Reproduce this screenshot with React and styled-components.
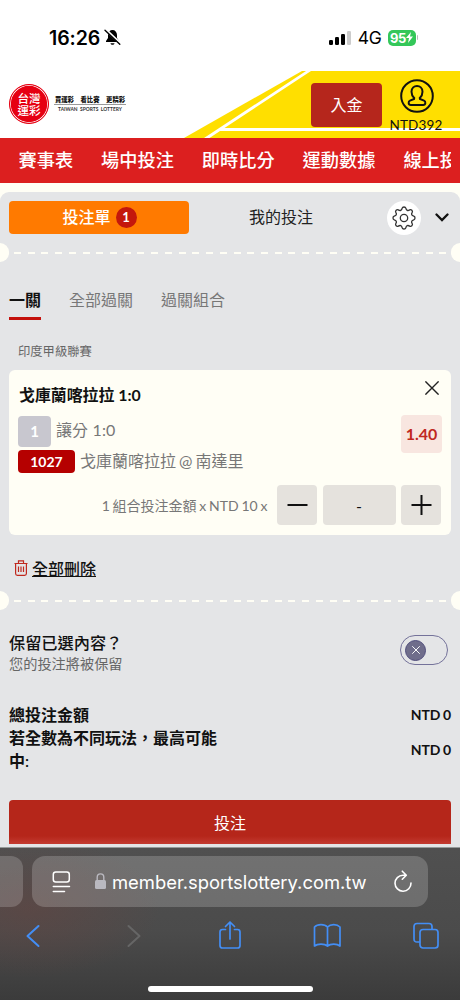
import styled, { createGlobalStyle } from 'styled-components';

const GlobalStyle = createGlobalStyle`
  * {
    box-sizing: border-box;
  }

  body {
    margin: 0;
    background: #fffef5;
    font-family: Lato, "Noto Sans CJK TC", sans-serif;
    color: #111;
  }

  button {
    font-family: inherit;
    border: none;
    padding: 0;
    cursor: pointer;
  }

  svg {
    display: block;
    flex-shrink: 0;
  }
`;

const Phone = styled.div`
  width: 460px;
  height: 1000px;
  display: flex;
  flex-direction: column;
  overflow: hidden;
  white-space: nowrap;
`;

const StatusBar = styled.div`
  height: 71px;
  padding: 4px 42px 0 49px;
  display: flex;
  align-items: center;
  justify-content: space-between;
  background: #fff;
  color: #000;
  font-family: Inter, sans-serif;
`;

const StatusGroup = styled.div`
  display: flex;
  align-items: center;
  gap: ${(props) => props.$gap}px;
`;

const Clock = styled.span`
  font-size: 19.5px;
  font-weight: 600;
  letter-spacing: -0.1px;
`;

const Network = styled.span`
  font-size: 17.5px;
  font-weight: 400;
  letter-spacing: -0.3px;
`;

const BatteryGroup = styled.div`
  display: flex;
  align-items: center;
  gap: 1px;

  &::after {
    content: "";
    width: 1.5px;
    height: 5px;
    border-radius: 0 2px 2px 0;
    background: #bbb;
  }
`;

const Battery = styled.div`
  width: 28px;
  height: 16px;
  display: flex;
  align-items: center;
  justify-content: center;
  border-radius: 5px;
  background: #34c759;
  color: #fff;
  font-size: 13px;
  font-weight: 700;
  letter-spacing: -0.4px;
`;

const Header = styled.header`
  height: 67px;
  display: grid;
  background: #fff;

  > * {
    grid-area: 1 / 1;
  }
`;

const HeaderContent = styled.div`
  display: flex;
  z-index: 1;
  padding-left: 9px;
`;

const Logo = styled.div`
  width: 40px;
  height: 40px;
  margin-top: 13px;
  padding-top: 8px;
  display: flex;
  flex-direction: column;
  align-items: center;
  border: 1px solid #e60012;
  border-radius: 50%;
  background: #e60012;
  box-shadow: inset 0 0 0 0.8px #fff;
  color: #fff;
  font-size: 11.6px;
  font-weight: 500;
  line-height: 11.5px;
`;

const Slogan = styled.div`
  width: 72px;
  margin: 22px 0 0 5px;
  display: flex;
  flex-direction: column;
  align-items: center;
`;

const SloganText = styled.div`
  width: 100%;
  height: 12px;
  display: flex;
  justify-content: space-between;
  padding: 0 1px;
  border-bottom: 1px solid #999;
  font-size: 6.3px;
  font-weight: 900;
  line-height: 13px;
`;

const SloganEnglish = styled.div`
  margin-top: 1px;
  color: #333;
  font-size: 4.9px;
  font-weight: 700;
  line-height: 7px;
  word-spacing: 1.3px;
`;

const DepositButton = styled.button`
  width: 71px;
  height: 44px;
  margin: 12px 0 0 auto;
  padding-bottom: 2px;
  border-radius: 4px;
  background: #b5261c;
  color: #fff;
  font-size: 16px;
`;

const Account = styled.div`
  width: 78px;
  padding-top: 8px;
  display: flex;
  flex-direction: column;
  align-items: center;
  font-size: 13.5px;
  line-height: 18px;

  span {
    margin: 3px 10px 0 0;
    letter-spacing: 0.2px;
  }

  svg {
    margin-right: 8px;
  }
`;

const Nav = styled.nav`
  height: 45px;
  padding: 0 9px 0 18.5px;
  background: #dc1f1f;
`;

const NavList = styled.div`
  display: flex;
  gap: 28px;
  overflow: hidden;
  color: #fff;
  font-size: 18.2px;
  font-weight: 500;
  line-height: 45px;

  span {
    flex-shrink: 0;
  }
`;

const Slip = styled.main`
  height: 655px;
  margin-top: 9px;
  display: flex;
  flex-direction: column;
  border-radius: 9px 9px 0 0;
  background: #e4e5e7;
`;

const SlipTabs = styled.div`
  height: 51px;
  padding: 0 11px 0 9px;
  display: flex;
  align-items: center;
`;

const SlipTab = styled.button`
  width: ${(props) => (props.$active ? 180 : 184)}px;
  height: 33px;
  padding-bottom: ${(props) => (props.$active ? 0 : 3)}px;
  display: flex;
  align-items: center;
  justify-content: center;
  gap: 5px;
  border-radius: 4px;
  background: ${(props) => (props.$active ? '#ff7a00' : 'transparent')};
  color: ${(props) => (props.$active ? '#fff' : '#222')};
  font-size: 16px;
  font-weight: ${(props) => (props.$active ? 500 : 400)};
`;

const TabLabel = styled.span`
  padding: 0 0 3px 1px;
`;

const Count = styled.span`
  width: 21px;
  height: 21px;
  border-radius: 50%;
  background: #c4170c;
  font-size: 13px;
  font-weight: 700;
  line-height: 21px;
`;

const SettingsButton = styled.button`
  width: 34px;
  height: 34px;
  margin: 0 auto 0 14px;
  display: flex;
  align-items: center;
  justify-content: center;
  border-radius: 50%;
  background: #fff;
`;

const Perforation = styled.div`
  height: 19px;
  display: flex;
  align-items: center;
  justify-content: space-between;

  &::before,
  &::after {
    content: "";
    width: 9px;
    height: 19px;
    background: #fffef5;
  }

  &::before {
    border-radius: 0 10px 10px 0;
  }

  &::after {
    border-radius: 10px 0 0 10px;
  }
`;

const Dashes = styled.div`
  height: 2px;
  margin: 1px 0 0 5px;
  flex: 1;
  background: repeating-linear-gradient(90deg, #fffef5 0 7px, transparent 7px 13.72px);
`;

const ModeTabs = styled.div`
  height: 58px;
  padding: 24px 9px 0;
  display: flex;
  gap: 28px;
`;

const ModeTab = styled.div`
  height: 34px;
  border-bottom: 3px solid ${(props) => (props.$active ? '#c4110c' : 'transparent')};
  color: ${(props) => (props.$active ? '#111' : '#777')};
  font-size: 16px;
  font-weight: ${(props) => (props.$active ? 700 : 400)};
  line-height: 27px;
`;

const League = styled.div`
  height: 50px;
  padding: 22px 18px 0;
  color: #666;
  font-size: 12.3px;
  line-height: 20px;
`;

const Card = styled.section`
  height: 165px;
  margin: 0 9px;
  padding: 8px 9px 0;
  border-radius: 6px;
  background: #fffef5;
`;

const CardTop = styled.div`
  height: 37px;
  padding-left: 1px;
  display: flex;
  justify-content: space-between;
  font-size: 15.9px;
  font-weight: 700;
  line-height: 33px;

  svg {
    margin: 3px 3px 0 0;
  }
`;

const CardBody = styled.div`
  height: 69px;
  display: flex;
  justify-content: space-between;
`;

const Line = styled.div`
  height: ${(props) => props.$height}px;
  display: flex;
  align-items: center;
  gap: 5px;
  color: #777;
  font-size: 16px;
`;

const LineText = styled.span`
  padding-bottom: 4px;
  word-spacing: ${(props) => (props.$tight ? -1 : 0.5)}px;
`;

const Tag = styled.span`
  width: ${(props) => (props.$live ? 57 : 33)}px;
  height: ${(props) => (props.$live ? 23 : 31)}px;
  border-radius: 4px;
  background: ${(props) => (props.$live ? '#b50000' : '#c8c7cf')};
  color: #fff;
  font-size: ${(props) => (props.$live ? 14 : 15)}px;
  font-weight: 700;
  line-height: ${(props) => (props.$live ? 23 : 31)}px;
  text-align: center;
`;

const Odds = styled.div`
  width: 41px;
  height: 38px;
  border-radius: 4px;
  background: #f8e6e0;
  color: #c0281e;
  font-size: 16px;
  font-weight: 700;
  line-height: 38px;
  text-align: center;
`;

const StakeRow = styled.div`
  height: 40px;
  margin-top: 1px;
  padding-right: 1px;
  display: flex;
  align-items: center;
  justify-content: flex-end;
  gap: 5.5px;
  color: #777;
  font-size: 14px;
`;

const StakeLabel = styled.span`
  margin: 0 4px 1px 0;
  word-spacing: -0.8px;
`;

const StakeBox = styled.button`
  width: ${(props) => (props.$wide ? 73 : 40)}px;
  height: 40px;
  display: flex;
  align-items: center;
  justify-content: center;
  border-radius: 4px;
  background: #e5e2dd;
  color: #111;
  font-size: 16px;
`;

const DeleteAll = styled.div`
  height: 56px;
  padding: 10px 14px 0;
  display: flex;
  align-items: center;
  gap: 4px;
  font-size: 16px;
  font-weight: 500;
  text-decoration: underline;
`;

const KeepRow = styled.div`
  height: 93px;
  padding: 21px 12px 0 9px;
  display: flex;
  justify-content: space-between;
`;

const KeepTitle = styled.div`
  font-size: 16.2px;
  font-weight: 500;
  line-height: 23px;
`;

const KeepNote = styled.div`
  color: #666;
  font-size: 14.2px;
  line-height: 20px;
`;

const Toggle = styled.div`
  width: 48px;
  height: 30px;
  margin-top: 4px;
  padding: 0 4px;
  display: flex;
  align-items: center;
  border: 1px solid #74729a;
  border-radius: 15px;
`;

const Knob = styled.div`
  width: 21px;
  height: 21px;
  display: flex;
  align-items: center;
  justify-content: center;
  border: 1px solid #504d7c;
  border-radius: 50%;
  background: #6f6d8b;
`;

const Totals = styled.div`
  height: 97px;
  padding: 0 9px;
  font-size: 16px;
  font-weight: 600;
`;

const TotalRow = styled.div`
  display: flex;
  align-items: center;
  justify-content: space-between;
  line-height: 23px;
`;

const TotalLabel = styled.div`
  width: 215px;
  white-space: normal;
`;

const Amount = styled.div`
  font-size: 14px;
  font-weight: 700;
  word-spacing: -1px;
`;

const BetButton = styled.button`
  height: 44px;
  flex-shrink: 0;
  margin: 0 9px;
  border-radius: 4px 4px 0 0;
  background: linear-gradient(#b5261a 36px, #c33b31);
  color: #fff;
  font-size: 16px;
`;

const Browser = styled.footer`
  height: 153px;
  display: flex;
  flex-direction: column;
  align-items: center;
  background:
    radial-gradient(ellipse 130px 70px at 30px 60px, rgba(110, 65, 60, 0.4), transparent),
    linear-gradient(#505050, #4b4b4b 55%, #3b3b3b);
  border-top: 1px solid #959a9a;
`;

const AddressRow = styled.div`
  width: 100%;
  height: 61px;
  padding-top: 8px;
  display: flex;
  gap: 9px;
`;

const PreviousPage = styled.div`
  width: 23px;
  height: 51px;
  border-radius: 0 12px 12px 0;
  background: rgba(255, 255, 255, 0.18);
`;

const AddressBar = styled.div`
  width: 396px;
  height: 51px;
  padding: 0 15px 0 20px;
  display: flex;
  align-items: center;
  border-radius: 13px;
  background: rgba(255, 255, 255, 0.19);
  color: #fff;
  font-family: Inter, sans-serif;
  font-size: 18.4px;

  svg:last-child {
    margin-left: auto;
  }
`;

const Address = styled.span`
  margin-left: 6px;
`;

const Lock = styled.span`
  margin: 0 0 2px 24px;
`;

const Toolbar = styled.div`
  width: 100%;
  height: 77px;
  padding: 11px 20px 0;
  display: flex;
  justify-content: space-between;
`;

const HomeIndicator = styled.div`
  width: 165px;
  height: 6px;
  border-radius: 3px;
  background: #fff;
`;

const BellOffIcon = () => (
  <svg width="17" height="17" viewBox="0 0 17 17">
    <path d="M8.500 1C6 1 4 3 4 6v3L2 12v1h13v-1l-2-3V6C13 3 11 1 8.500 1z" fill="#000" />
    <path d="M6.500 14.200h4c-.4 2-3.600 2-4 0z" fill="#000" />
    <path d="M1.700 .7l14.500 13.700" stroke="#fff" strokeWidth="2.600" />
    <path d="M1 1.200l14.800 14" stroke="#000" strokeWidth="1.400" strokeLinecap="round" />
  </svg>
);

const SignalIcon = () => (
  <svg width="23" height="14" viewBox="0 0 23 14">
    <rect x="0" y="9" width="4" height="5" rx="1.200" />
    <rect x="6" y="6" width="4" height="8" rx="1.200" />
    <rect x="12" y="3" width="4" height="11" rx="1.200" />
    <rect x="18" y="0" width="4" height="14" rx="1.200" fill="#ccc" />
  </svg>
);

const BoltIcon = () => (
  <svg width="7" height="11" viewBox="0 0 7 11">
    <path d="M5 0L0 6h3L2 11l5-6.500H4z" fill="#fff" />
  </svg>
);

const HeaderArt = () => (
  <svg width="460" height="67" viewBox="0 0 460 67">
    <path d="M302 0H460V67H184z" fill="#ffdf00" />
    <path d="M306 0h5L224.500 57H460v3H220L209.500 67H204z" fill="#fff" />
  </svg>
);

const UserIcon = () => (
  <svg width="34" height="34" viewBox="0 0 34 34" fill="none" stroke="#111" strokeWidth="2">
    <circle cx="17" cy="17" r="15.800" />
    <path d="M14.200 19c-1.600-1.500-2.700-4-2.700-6.300 0-7.600 11-7.600 11 0 0 2.300-1.100 4.800-2.700 6.300l.2 1 4 1.600c2 .8 1.800 4.400-.8 4.400H10.800c-2.600 0-2.800-3.600-.8-4.400l4-1.600z" />
  </svg>
);

const GearIcon = () => (
  <svg width="24" height="24" viewBox="0 0 24 24" fill="none" stroke="#333" strokeWidth="1.300" strokeLinejoin="round">
    <circle cx="12" cy="12" r="3.700" />
    <path d="M10.200 2.200C10.600.6 13.400.6 13.800 2.200c.5 2.300 2 2.900 3.900 1.700 1.500-.9 3.400 1 2.500 2.500-1.200 1.900-.6 3.300 1.600 3.800 1.600.4 1.600 3.200 0 3.600-2.200.5-2.800 1.900-1.600 3.800.9 1.500-1 3.400-2.500 2.500-1.900-1.200-3.400-.6-3.900 1.700-.4 1.600-3.200 1.600-3.600 0-.5-2.300-2-2.900-3.900-1.700-1.500.9-3.400-1-2.500-2.500 1.200-1.900.6-3.300-1.600-3.800-1.600-.4-1.600-3.200 0-3.600 2.200-.5 2.800-1.900 1.600-3.800-.9-1.500 1-3.400 2.500-2.500 1.900 1.200 3.400.6 3.900-1.700z" />
  </svg>
);

const ChevronIcon = () => (
  <svg width="14" height="9" viewBox="0 0 14 9" fill="none" stroke="#111" strokeWidth="2.300" strokeLinecap="round">
    <path d="M1.500 1.500L7 7l5.500-5.500" />
  </svg>
);

const CloseIcon = ({ size, color, width }) => (
  <svg width={size} height={size} viewBox="0 0 14 14" stroke={color} strokeWidth={width}>
    <path d="M.4 .4l13.200 13.200M13.600 .4L.4 13.600" />
  </svg>
);

const MinusIcon = () => (
  <svg width="21" height="21" viewBox="0 0 21 21" stroke="#111" strokeWidth="2">
    <path d="M.5 10H20.500" />
  </svg>
);

const PlusIcon = () => (
  <svg width="21" height="21" viewBox="0 0 21 21" stroke="#111" strokeWidth="2">
    <path d="M.5 10H20.500M10.500 0V20" />
  </svg>
);

const TrashIcon = () => (
  <svg width="14" height="16" viewBox="0 0 14 16" fill="none" stroke="#c0281e" strokeWidth="1.200">
    <path d="M.5 3.500h13M1.600 3.800v9.700q0 1.800 1.800 1.800h7.200q1.800 0 1.800-1.800V3.800M4.500 3.200V.8h5v2.400M4.500 6.500v5.500M7 6.500v5.500M9.500 6.500v5.500" />
  </svg>
);

const ReaderIcon = () => (
  <svg width="19" height="22" viewBox="0 0 19 22" fill="none" stroke="#fff" strokeWidth="1.500" strokeLinecap="round">
    <rect x="1.300" y="1" width="16" height="10" rx="2.500" />
    <path d="M1.300 15.500h16.200M1.300 20.500h11.200" />
  </svg>
);

const LockIcon = () => (
  <svg width="11" height="16" viewBox="0 0 11 16">
    <rect x="0" y="7" width="11" height="9" rx="1.500" fill="#bab9c0" />
    <path d="M2.200 8V4.200c0-4.500 6.600-4.500 6.600 0V8" fill="none" stroke="#bab9c0" strokeWidth="1.400" />
  </svg>
);

const ReloadIcon = () => (
  <svg width="20" height="24" viewBox="0 0 20 24" fill="none" stroke="#fff" strokeWidth="1.600" strokeLinecap="round" strokeLinejoin="round">
    <path d="M12.500 5.200H10A8 8 0 1 0 18 13M9.300 1.200l4 4-4 4" />
  </svg>
);

const ToolIcon = ({ width, children, color = '#438ef5' }) => (
  <svg width={width} height="30" viewBox={`0 0 ${width} 30`} fill="none" stroke={color} strokeWidth="1.700" strokeLinecap="round" strokeLinejoin="round">
    {children}
  </svg>
);

const App = () => {
  return (
    <>
      <GlobalStyle />
      <Phone>
        <StatusBar>
          <StatusGroup $gap={4}>
            <Clock>16:26</Clock>
            <BellOffIcon />
          </StatusGroup>
          <StatusGroup $gap={6}>
            <SignalIcon />
            <Network>4G</Network>
            <BatteryGroup>
              <Battery>
                95
                <BoltIcon />
              </Battery>
            </BatteryGroup>
          </StatusGroup>
        </StatusBar>

        <Header>
          <HeaderArt />
          <HeaderContent>
            <Logo>
              <span>台灣</span>
              <span>運彩</span>
            </Logo>
            <Slogan>
              <SloganText>
                <span>買運彩</span>
                <span>看比賽</span>
                <span>更精彩</span>
              </SloganText>
              <SloganEnglish>TAIWAN SPORTS LOTTERY</SloganEnglish>
            </Slogan>
            <DepositButton>入金</DepositButton>
            <Account>
              <UserIcon />
              <span>NTD392</span>
            </Account>
          </HeaderContent>
        </Header>

        <Nav>
          <NavList>
            <span>賽事表</span>
            <span>場中投注</span>
            <span>即時比分</span>
            <span>運動數據</span>
            <span>線上投注</span>
          </NavList>
        </Nav>

        <Slip>
          <SlipTabs>
            <SlipTab $active>
              <TabLabel>投注單</TabLabel>
              <Count>1</Count>
            </SlipTab>
            <SlipTab>我的投注</SlipTab>
            <SettingsButton>
              <GearIcon />
            </SettingsButton>
            <ChevronIcon />
          </SlipTabs>
          <Perforation>
            <Dashes />
          </Perforation>

          <ModeTabs>
            <ModeTab $active>一關</ModeTab>
            <ModeTab>全部過關</ModeTab>
            <ModeTab>過關組合</ModeTab>
          </ModeTabs>
          <League>印度甲級聯賽</League>
          <Card>
            <CardTop>
              戈庫蘭喀拉拉 1:0
              <CloseIcon size={14} color="#222" width={1.4} />
            </CardTop>
            <CardBody>
              <div>
                <Line $height={32}>
                  <Tag>1</Tag>
                  <LineText>讓分 1:0</LineText>
                </Line>
                <Line $height={29}>
                  <Tag $live>1027</Tag>
                  <LineText $tight>戈庫蘭喀拉拉 @ 南達里</LineText>
                </Line>
              </div>
              <Odds>1.40</Odds>
            </CardBody>
            <StakeRow>
              <StakeLabel>1 組合投注金額 x NTD 10 x</StakeLabel>
              <StakeBox>
                <MinusIcon />
              </StakeBox>
              <StakeBox $wide>-</StakeBox>
              <StakeBox>
                <PlusIcon />
              </StakeBox>
            </StakeRow>
          </Card>
          <DeleteAll>
            <TrashIcon />
            <span>全部刪除</span>
          </DeleteAll>
          <Perforation>
            <Dashes />
          </Perforation>

          <KeepRow>
            <div>
              <KeepTitle>保留已選內容？</KeepTitle>
              <KeepNote>您的投注將被保留</KeepNote>
            </div>
            <Toggle>
              <Knob>
                <CloseIcon size={8} color="#fff" width={1.7} />
              </Knob>
            </Toggle>
          </KeepRow>
          <Totals>
            <TotalRow>
              <TotalLabel>總投注金額</TotalLabel>
              <Amount>NTD 0</Amount>
            </TotalRow>
            <TotalRow>
              <TotalLabel>若全數為不同玩法，最高可能中:</TotalLabel>
              <Amount>NTD 0</Amount>
            </TotalRow>
          </Totals>
          <BetButton>投注</BetButton>
        </Slip>

        <Browser>
          <AddressRow>
            <PreviousPage />
            <AddressBar>
              <ReaderIcon />
              <Lock>
                <LockIcon />
              </Lock>
              <Address>member.sportslottery.com.tw</Address>
              <ReloadIcon />
            </AddressBar>
          </AddressRow>
          <Toolbar>
            <ToolIcon width={26}>
              <path d="M18.500 6L7.500 16l11 10" strokeWidth="2" />
            </ToolIcon>
            <ToolIcon width={26} color="#666">
              <path d="M10.500 6l11 10-11 10" strokeWidth="2" />
            </ToolIcon>
            <ToolIcon width={26}>
              <path d="M9.500 9.500H6.500q-2.500 0-2.500 2.500v13.500q0 2.500 2.500 2.500h15q2.500 0 2.500-2.500V12q0-2.500-2.500-2.500h-3M14 19V2M9.500 6.500L14 2l4.500 4.500" />
            </ToolIcon>
            <ToolIcon width={28}>
              <path d="M14.500 7C11.500 3.700 4.500 3.700 1.500 7v19c3-2.500 10-2.500 13 0 3-2.500 9.500-2.500 12.500 0V7c-3-3.300-9.500-3.300-12.500 0zM14.500 7v19" />
            </ToolIcon>
            <ToolIcon width={27}>
              <path d="M6.500 22H4q-3 0-3-3V6.500q0-3 3-3h12q3 0 3 3v2.500" />
              <rect x="7" y="9.500" width="18" height="18.500" rx="3" />
            </ToolIcon>
          </Toolbar>
          <HomeIndicator />
        </Browser>
      </Phone>
    </>
  );
};

export default App;
